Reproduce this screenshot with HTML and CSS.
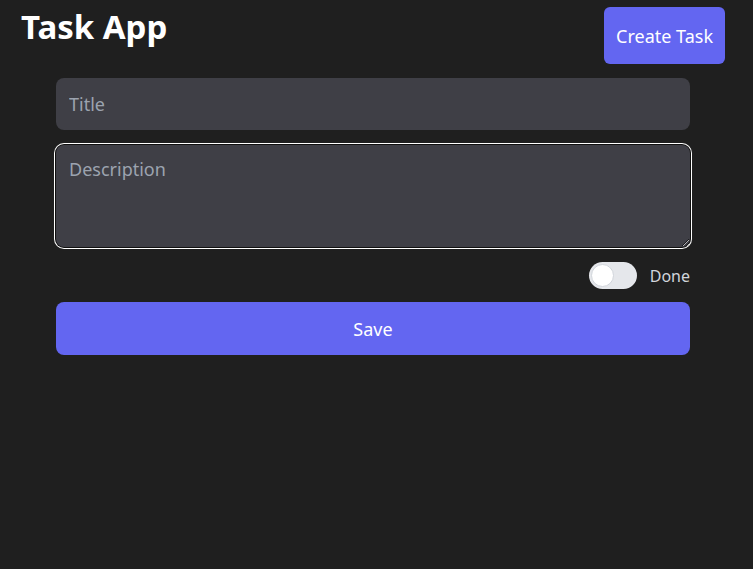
FILE: index.html
```html
<!DOCTYPE html>
<html>
<head>
<meta charset="utf-8">
<link rel="stylesheet" href="styles.css">
</head>
<body>
<header class="header">
  <h1 class="title">Task App</h1>
  <button class="create-btn">Create Task</button>
</header>
<form class="form">
  <input class="field" type="text" placeholder="Title">
  <textarea class="field area" placeholder="Description" autofocus></textarea>
  <div class="done-row">
    <span class="toggle"><span class="knob"></span></span>
    <span class="done-label">Done</span>
  </div>
  <button type="button" class="save-btn">Save</button>
</form>
</body>
</html>
```
FILE: styles.css
```css
html, body {
  margin: 0;
  padding: 0;
  background: #1f1f1f;
  font-family: "Noto Sans", "Open Sans", sans-serif;
  height: 100%;
}
.header {
  display: flex;
  justify-content: space-between;
  align-items: flex-start;
  padding: 7px 28px 0 21px;
  height: 78px;
  box-sizing: border-box;
}
.title {
  margin: 0;
  font-size: 33px;
  font-weight: 700;
  color: #ffffff;
  line-height: 40px;
}
.create-btn {
  background: #6366f1;
  color: #ffffff;
  border: none;
  border-radius: 6px;
  font-family: inherit;
  font-size: 18px;
  height: 57px;
  padding: 0 12px;
}
.form {
  margin-left: 56px;
  width: 634px;
  display: flex;
  flex-direction: column;
}
.field {
  background: #3f3f46;
  border: none;
  border-radius: 8px;
  color: #ffffff;
  font-family: inherit;
  font-size: 18px;
  height: 52px;
  padding: 0 13px;
  box-sizing: border-box;
  outline: none;
}
.field::placeholder {
  color: #9ca3af;
}
.area {
  margin-top: 15px;
  height: 102px;
  padding: 12px 13px;
  resize: vertical;
  caret-color: #ffffff;
  box-shadow: 0 0 0 1px #101010, 0 0 0 2px #ffffff;
}
.done-row {
  display: flex;
  justify-content: flex-end;
  align-items: center;
  gap: 13px;
  margin-top: 15px;
  height: 27px;
}
.toggle {
  width: 48px;
  height: 27px;
  border-radius: 14px;
  background: #e5e7eb;
  display: flex;
  align-items: center;
  padding-left: 2px;
  box-sizing: border-box;
}
.knob {
  width: 23px;
  height: 23px;
  border-radius: 50%;
  background: #ffffff;
  border: 1px solid #d1d5db;
  box-sizing: border-box;
}
.done-label {
  color: #d1d5db;
  font-size: 16px;
}
.save-btn {
  margin-top: 13px;
  height: 53px;
  background: #6366f1;
  color: #ffffff;
  border: none;
  border-radius: 8px;
  font-family: inherit;
  font-size: 18px;
}
```
